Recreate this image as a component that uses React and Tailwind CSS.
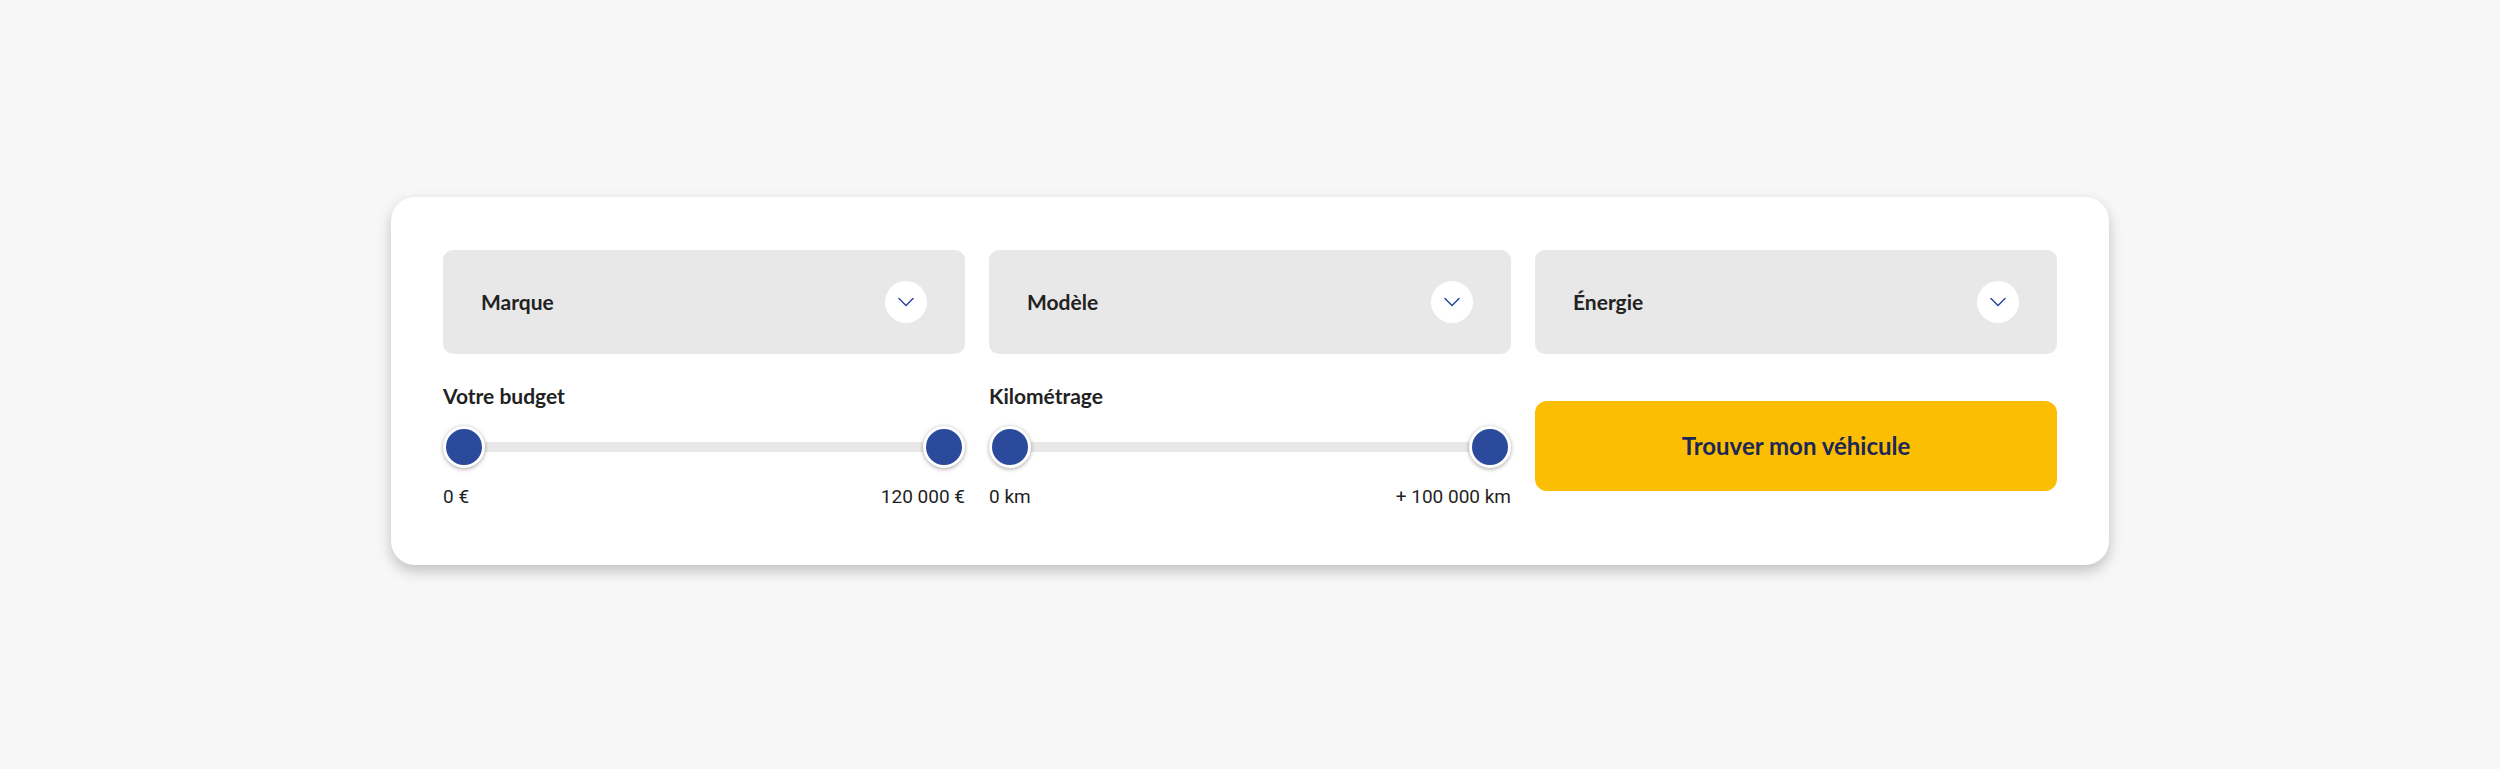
import { ChevronDown } from "lucide-react";

function Select({ label }) {
  return (
    <button className="h-[104px] w-full bg-[#e8e8e8] rounded-[10px] pl-[38px] pr-[38px] flex items-center justify-between">
      <span className="text-[21px] font-bold text-[#222222] font-['Lato',sans-serif]">{label}</span>
      <span className="w-[42px] h-[42px] rounded-full bg-white flex items-center justify-center">
        <ChevronDown size={28} strokeWidth={1.3} className="text-[#2b4a9b]" />
      </span>
    </button>
  );
}

function RangeSlider({ label, min, max }) {
  return (
    <div className="flex flex-col">
      <div className="text-[21px] leading-[28px] font-bold text-[#222222] font-['Lato',sans-serif]">{label}</div>
      <div className="relative mt-4 h-[42px] flex items-center">
        <div className="h-[10px] w-full bg-[#e8e8e8] rounded-full" />
        <span className="absolute left-0 top-0 w-[42px] h-[42px] rounded-full bg-[#2b4a9b] border-[3px] border-white shadow-[0_1px_4px_rgba(0,0,0,0.35)]" />
        <span className="absolute right-0 top-0 w-[42px] h-[42px] rounded-full bg-[#2b4a9b] border-[3px] border-white shadow-[0_1px_4px_rgba(0,0,0,0.35)]" />
      </div>
      <div className="mt-[17px] flex justify-between text-[19px] leading-[24px] text-[#1f1f1f] font-['Roboto',sans-serif]">
        <span>{min}</span>
        <span>{max}</span>
      </div>
    </div>
  );
}

export default function App() {
  return (
    <div className="min-h-screen bg-[#f7f7f7] flex justify-center pt-[197px]">
      <div className="w-[1718px] h-[368px] bg-white rounded-3xl shadow-[0_6px_14px_rgba(0,0,0,0.22)] px-[52px] pt-[53px]">
        <div className="grid grid-cols-3 gap-x-6">
          <Select label="Marque" />
          <Select label="Modèle" />
          <Select label="Énergie" />
        </div>
        <div className="grid grid-cols-3 gap-x-6 mt-[28px] items-center">
          <RangeSlider label="Votre budget" min="0 €" max="120 000 €" />
          <RangeSlider label="Kilométrage" min="0 km" max="+ 100 000 km" />
          <button className="h-[90px] w-full bg-[#fcbe02] rounded-xl text-[24px] font-bold text-[#1b2755] font-['Lato',sans-serif]">
            Trouver mon véhicule
          </button>
        </div>
      </div>
    </div>
  );
}
